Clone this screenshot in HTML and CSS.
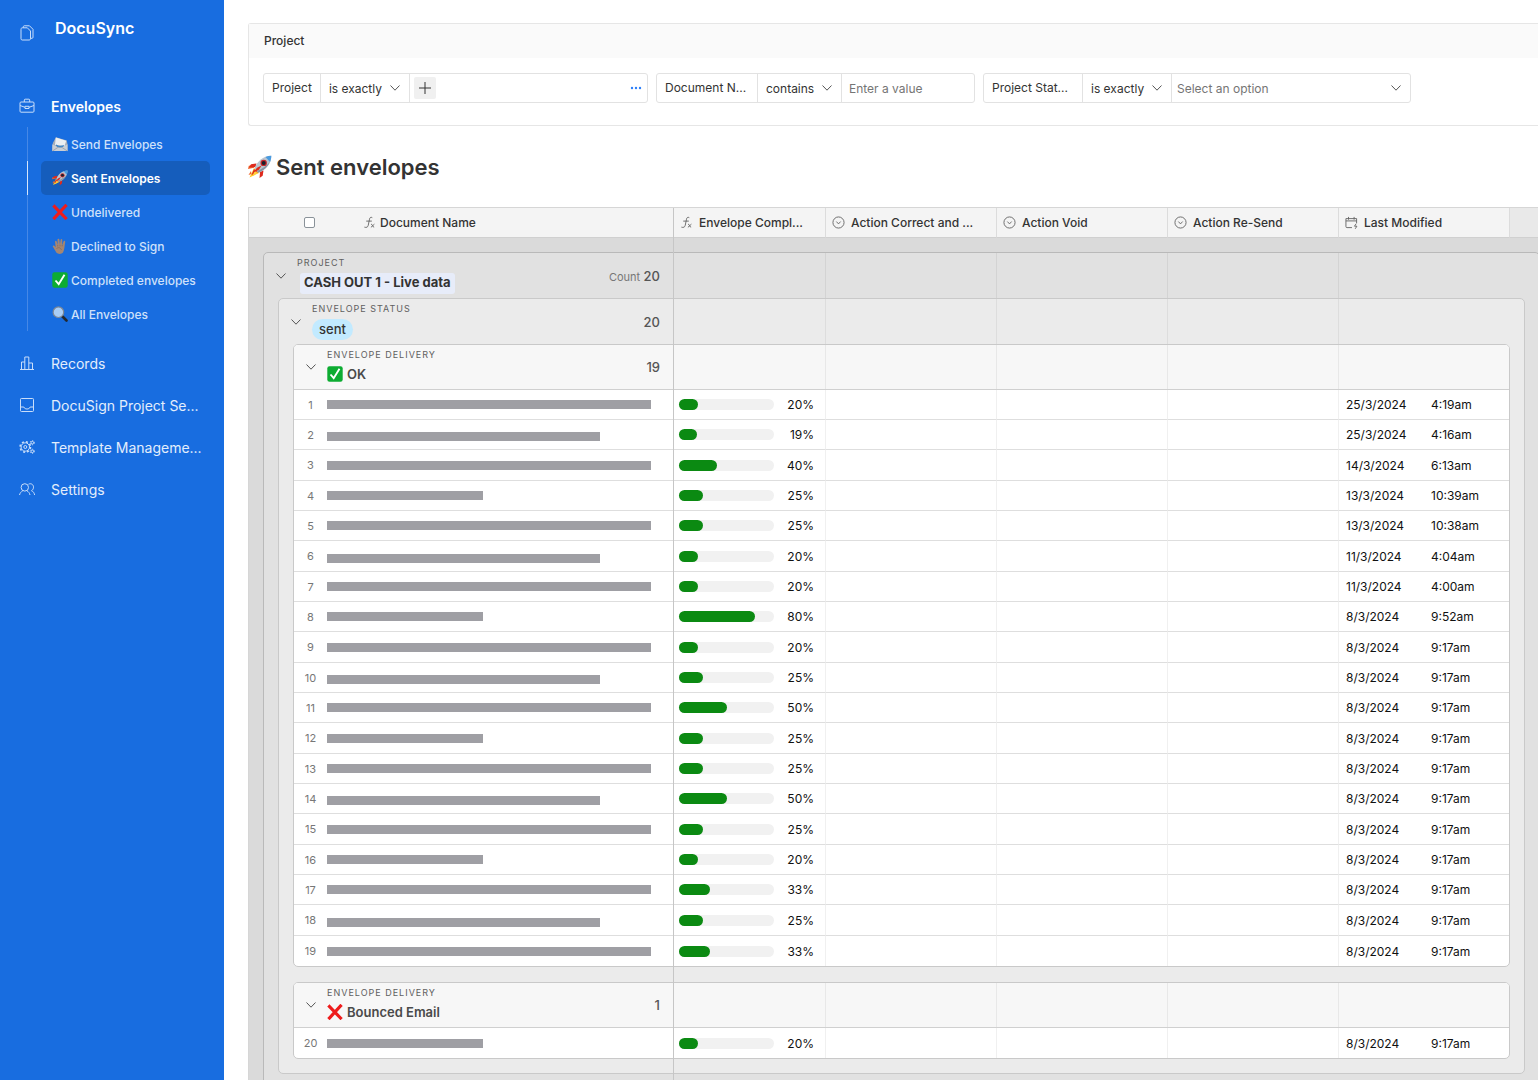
FILE: index.html
```html
<!DOCTYPE html>
<html lang="en">
<head>
  <meta charset="UTF-8">
  <meta name="viewport" content="width=device-width, initial-scale=1">
  <title>DocuSync - Sent envelopes</title>
  <link rel="stylesheet" href="styles.css">
</head>
<body>

  <!-- shared icons -->
  <svg class="sprite" aria-hidden="true">
    <symbol id="chevron" viewBox="0 0 12 12"><path d="M1.500 3.500L6 8.200l4.500-4.700"/></symbol>
    <symbol id="formula" viewBox="0 0 14 14"><path d="M10 1.800C8.300.8 7.300 1.700 7 3.500L5.600 10.200C5.200 12 3.800 12.700 1.500 12M3.500 5.500h6M8.700 8.800c1.500-.4 1.700 3.600 3.300 3.200M12.300 8.800L8.500 12.200"/></symbol>
    <symbol id="select" viewBox="0 0 14 14"><circle cx="7" cy="7" r="6"/><path d="M4.700 6L7 8.500 9.300 6"/></symbol>
    <symbol id="calendar" viewBox="0 0 14 14"><path d="M7.500 12.500H2.200a1.200 1.200 0 0 1-1.200-1.200V2.800h11.500v5M1 5.300h11.500M3.800 1v3M9.800 1v3M12 8.300l-1.800 2.700h2.600L11 13.800"/></symbol>
    <symbol id="rocket" viewBox="0 0 24 24">
      <path fill="#ffc928" d="M6 13l-4.500 9.500L11 18z"/>
      <path fill="#f0652b" d="M7.500 9.500L.8 10.800 0 14l6-1.200zM3 16l-2.500 4 3-1z"/>
      <path fill="#dd2a1d" d="M8.500 8.500L3 9.200 1 12.500l6.500-.5zM15.500 15.500l-.8 5.300-3.200 2.200.6-6.200zM6 14l-2.500 6L9.800 17.600z"/>
      <path fill="#ffd23c" d="M6.800 15.500L4.500 21l5-3z"/>
      <path fill="#b9c4cf" d="M6.500 13.500C9 6.500 15 .8 23.300.7c0 7.700-4.800 13.800-12.800 17z"/>
      <path fill="#4a9be0" d="M17.500 1.900C19.300 1.100 21.200.7 23.300.7c0 2.300-.5 4.500-1.300 6.300z"/>
      <path fill="#8794a3" d="M21.900 7c-2 4.700-6 8.500-11.400 10.700l-1.700-1.800C14.500 14 19 10.500 21.900 7z"/>
      <circle cx="15.700" cy="7.900" r="3.200" fill="#c6242a"/>
      <circle cx="15.700" cy="7.900" r="2" fill="#17202c"/>
      <path fill="#dd2a1d" d="M13.500 10.500L9 12.800l-4 5 6-3z"/>
    </symbol>
    <symbol id="cross" viewBox="0 0 16 16"><path fill="none" stroke="#ee1c1c" stroke-width="3.200" stroke-linecap="square" d="M2.500 2.500l11 11.500M13.500 2L2.500 14"/></symbol>
    <symbol id="check" viewBox="0 0 16 16">
      <rect x=".3" y=".3" width="15.400" height="15.400" rx="2.200" fill="#0dac32"/>
      <path fill="none" stroke="#fff" stroke-width="1.900" d="M3.500 8.500l3.200 3.700 5.800-9.400"/>
    </symbol>
    <symbol id="envelope" viewBox="0 0 16 16">
      <path fill="#a9afb8" d="M.8 7L4 1.200 14.800 4.500l.7 4V15H.3z"/>
      <path fill="#eceff2" d="M3.800 1.500l10.400 3.300L12.500 10 3 9z"/>
      <path fill="#3f87c9" d="M4 8.500c3 1.700 5.500 1.500 8 .5l-.5 2c-3 1-5.500.7-7.500-1z"/>
      <path fill="#c9ced5" d="M.3 8.200l6.500 3.600h2.500l6.200-3.600V15H.3z"/>
      <path fill="none" stroke="#8e96a1" stroke-width=".7" d="M.5 15l6-4M15.300 15l-6-4"/>
    </symbol>
    <symbol id="hand" viewBox="0 0 16 16">
      <path fill="#a58672" d="M4.300 14.500C3 12.500 1.700 10 .8 8.600c-.4-1 .8-1.600 1.600-.8l1.300 1.500L3 3.800c-.1-1.200 1.400-1.500 1.700-.3l1 3.700-.2-5.500c0-1.300 1.700-1.400 1.900-.1l.5 5.200.7-5c.2-1.200 1.800-1 1.700.3l-.2 5.300 1.400-3.900c.4-1.100 1.900-.7 1.700.5-.7 3.500-.7 8-2.200 10.500-1.300 1.900-5.200 1.900-6.700 0z"/>
      <path fill="none" stroke="#7d6557" stroke-width=".6" d="M5.700 7v1.500M8 6.700v1.600M10.200 7v1.300M4.500 10.500c2-1.500 4-1 5 1.500"/>
    </symbol>
    <symbol id="magnifier" viewBox="0 0 16 16">
      <path stroke="#23282f" stroke-width="2.600" stroke-linecap="round" d="M10.500 10.500l4 4"/>
      <circle cx="6.400" cy="6.200" r="5.300" fill="#a9cdf5" stroke="#7d8794" stroke-width="1.200"/>
    </symbol>
  </svg>

  <div class="app">
    <aside class="sidebar">
      <div class="brand">
        <svg class="icon" viewBox="0 0 16 16"><path d="M2 4.500v9.300c0 .7.500 1.200 1.200 1.200h7.100c.7 0 1.200-.5 1.200-1.200V6L8.300 2.800H3.200C2.500 2.800 2 3.400 2 4.500zM4.300 2.800V1.700c0-.5.400-.9.900-.9h5.300L14 4.300v8c0 .6-.4 1-1 1h-1.500"/></svg>
        <strong>DocuSync</strong>
      </div>

      <nav>
        <a class="nav-link open" href="#envelopes">
          <svg class="icon" viewBox="0 0 16 16"><path d="M2 4h12c.6 0 1 .4 1 1v8.200c0 .6-.4 1-1 1H2c-.6 0-1-.4-1-1V5c0-.6.4-1 1-1zM5.300 4V2c0-.5.3-.8.800-.8h3.800c.5 0 .8.3.8.800v2M1 7.500l5 1.800M15 7.500l-5 1.800M6 8.300h4v2.200H6z"/></svg>
          Envelopes
        </a>
        <ul class="subnav">
          <li><a href="#send"><svg><use href="#envelope"/></svg>Send Envelopes</a></li>
          <li class="active"><a href="#sent"><svg><use href="#rocket"/></svg>Sent Envelopes</a></li>
          <li><a href="#undelivered"><svg><use href="#cross"/></svg>Undelivered</a></li>
          <li><a href="#declined"><svg><use href="#hand"/></svg>Declined to Sign</a></li>
          <li><a href="#completed"><svg><use href="#check"/></svg>Completed envelopes</a></li>
          <li><a href="#all"><svg><use href="#magnifier"/></svg>All Envelopes</a></li>
        </ul>
        <a class="nav-link" href="#records">
          <svg class="icon" viewBox="0 0 16 16"><path d="M1 14.500h14M2.500 14.500V7h3.300M5.800 14.500V2h4v12.500M9.800 8h3.700v6.500"/></svg>
          Records
        </a>
        <a class="nav-link" href="#project-settings">
          <svg class="icon" viewBox="0 0 16 16"><path d="M2.300 1.500h11.400c.5 0 .8.300.8.800v11.400c0 .5-.3.800-.8.800H2.300c-.5 0-.8-.3-.8-.8V2.300c0-.5.300-.8.8-.8zM1.500 10h3.300c.5 1.300 1.600 2 3.200 2s2.700-.7 3.200-2h3.300"/></svg>
          DocuSign Project Se...
        </a>
        <a class="nav-link" href="#templates">
          <svg class="icon" viewBox="0 0 16 16"><circle cx="6.300" cy="8" r="4.200"/><circle cx="6.300" cy="8" r="1.500"/><circle cx="6.300" cy="8" r="5.200" stroke-width="1.600" stroke-dasharray="2 2.080"/><circle cx="13.300" cy="3.700" r="1.300"/><circle cx="13.300" cy="12.300" r="1.300"/><circle cx="13.300" cy="3.700" r="2.100" stroke-dasharray="1 1.200"/><circle cx="13.300" cy="12.300" r="2.100" stroke-dasharray="1 1.200"/></svg>
          Template Manageme...
        </a>
        <a class="nav-link" href="#settings">
          <svg class="icon" viewBox="0 0 16 16"><circle cx="5.800" cy="6.400" r="3.700"/><path d="M.5 14c.6-2.200 1.700-3.300 3.200-4.200M8 9.800c1.400.8 2.500 2 3 4.200M9.500 3.200c2.500-1.300 5 .3 5 3 0 1.600-.8 2.800-2 3.500 1.700.7 2.700 2.200 3.200 4.300"/></svg>
          Settings
        </a>
      </nav>
    </aside>

    <main>
      <section class="panel">
        <h2>Project</h2>
        <form class="filters">
          <div class="filter filter-project">
            <span class="field">Project</span>
            <span class="dropdown">
              <select aria-label="Project operator"><option>is exactly</option></select>
              <svg class="chevron"><use href="#chevron"/></svg>
            </span>
            <span class="picker">
              <button type="button" class="add" aria-label="Add project"><svg viewBox="0 0 12 12"><path d="M6 0v12M0 6h12"/></svg></button>
              <button type="button" class="more" aria-label="More"><svg viewBox="0 0 12 4"><circle cx="2" cy="2" r="1.200"/><circle cx="6" cy="2" r="1.200"/><circle cx="10" cy="2" r="1.200"/></svg></button>
            </span>
          </div>
          <div class="filter filter-document">
            <label class="field" for="documentName">Document N...</label>
            <span class="dropdown">
              <select aria-label="Document name operator"><option>contains</option></select>
              <svg class="chevron"><use href="#chevron"/></svg>
            </span>
            <input type="text" id="documentName" placeholder="Enter a value">
          </div>
          <div class="filter filter-status">
            <label class="field" for="projectStatus">Project Stat...</label>
            <span class="dropdown">
              <select aria-label="Project status operator"><option>is exactly</option></select>
              <svg class="chevron"><use href="#chevron"/></svg>
            </span>
            <span class="dropdown option">
              <select id="projectStatus"><option>Select an option</option></select>
              <svg class="chevron"><use href="#chevron"/></svg>
            </span>
          </div>
        </form>
      </section>

      <h1><svg><use href="#rocket"/></svg>Sent envelopes</h1>

      <div class="sheet">
        <table class="columns">
          <colgroup><col class="c-lead"><col class="c-progress"><col class="c-action"><col class="c-action"><col class="c-action"><col><col class="c-tail"></colgroup>
          <tr>
            <th><div class="first"><input type="checkbox" aria-label="Select all"><svg><use href="#formula"/></svg>Document Name</div></th>
            <th><div><svg><use href="#formula"/></svg>Envelope Compl...</div></th>
            <th><div><svg><use href="#select"/></svg>Action Correct and ...</div></th>
            <th><div><svg><use href="#select"/></svg>Action Void</div></th>
            <th><div><svg><use href="#select"/></svg>Action Re-Send</div></th>
            <th><div><svg><use href="#calendar"/></svg>Last Modified</div></th>
            <td class="tail"></td>
          </tr>
        </table>

        <section class="group project">
          <header class="group-head">
            <div class="group-title">
              <button type="button" aria-label="Collapse project"><svg class="chevron"><use href="#chevron"/></svg></button>
              <div class="group-name"><small>Project</small><span class="record">CASH OUT 1 - Live data</span></div>
              <div class="count"><span>Count</span> 20</div>
            </div>
            <i></i><i></i><i></i><i></i><i></i>
          </header>

          <section class="group status">
            <header class="group-head">
              <div class="group-title">
                <button type="button" aria-label="Collapse status"><svg class="chevron"><use href="#chevron"/></svg></button>
                <div class="group-name"><small>Envelope Status</small><span class="pill">sent</span></div>
                <div class="count">20</div>
              </div>
              <i></i><i></i><i></i><i></i><i></i>
            </header>

            <section class="group delivery">
              <header class="group-head">
                <div class="group-title">
                  <button type="button" aria-label="Collapse OK"><svg class="chevron"><use href="#chevron"/></svg></button>
                  <div class="group-name"><small>Envelope Delivery</small><b><svg><use href="#check"/></svg>OK</b></div>
                  <div class="count">19</div>
                </div>
                <i></i><i></i><i></i><i></i><i></i>
              </header>
              <table class="rows">
                <colgroup><col class="c-num"><col class="c-name"><col class="c-progress"><col class="c-action"><col class="c-action"><col class="c-action"><col></colgroup>
                <tbody id="okRows"></tbody>
              </table>
            </section>

            <section class="group delivery">
              <header class="group-head">
                <div class="group-title">
                  <button type="button" aria-label="Collapse Bounced Email"><svg class="chevron"><use href="#chevron"/></svg></button>
                  <div class="group-name"><small>Envelope Delivery</small><b><svg><use href="#cross"/></svg>Bounced Email</b></div>
                  <div class="count">1</div>
                </div>
                <i></i><i></i><i></i><i></i><i></i>
              </header>
              <table class="rows">
                <colgroup><col class="c-num"><col class="c-name"><col class="c-progress"><col class="c-action"><col class="c-action"><col class="c-action"><col></colgroup>
                <tbody id="bouncedRows"></tbody>
              </table>
            </section>
          </section>
        </section>
      </div>
    </main>
  </div>

  <script>
    // name length, percent complete, date, time
    const ok = [
      ['long', 20, '25/3/2024', '4:19am'],
      ['medium', 19, '25/3/2024', '4:16am'],
      ['long', 40, '14/3/2024', '6:13am'],
      ['short', 25, '13/3/2024', '10:39am'],
      ['long', 25, '13/3/2024', '10:38am'],
      ['medium', 20, '11/3/2024', '4:04am'],
      ['long', 20, '11/3/2024', '4:00am'],
      ['short', 80, '8/3/2024', '9:52am'],
      ['long', 20, '8/3/2024', '9:17am'],
      ['medium', 25, '8/3/2024', '9:17am'],
      ['long', 50, '8/3/2024', '9:17am'],
      ['short', 25, '8/3/2024', '9:17am'],
      ['long', 25, '8/3/2024', '9:17am'],
      ['medium', 50, '8/3/2024', '9:17am'],
      ['long', 25, '8/3/2024', '9:17am'],
      ['short', 20, '8/3/2024', '9:17am'],
      ['long', 33, '8/3/2024', '9:17am'],
      ['medium', 25, '8/3/2024', '9:17am'],
      ['long', 33, '8/3/2024', '9:17am']
    ];
    const bounced = [
      ['short', 20, '8/3/2024', '9:17am']
    ];

    function renderRows(id, rows, start) {
      document.getElementById(id).innerHTML = rows.map(([size, percent, date, time], index) => `
        <tr>
          <td class="num">${start + index}</td>
          <td><span class="hidden-name ${size}"></span></td>
          <td><div class="progress"><span class="track"><span class="fill" style="width: ${percent}%"></span></span>${percent}%</div></td>
          <td></td>
          <td></td>
          <td></td>
          <td><div class="modified"><span>${date}</span><span>${time}</span></div></td>
        </tr>
      `).join('');
    }

    renderRows('okRows', ok, 1);
    renderRows('bouncedRows', bounced, 20);
  </script>

</body>
</html>
```

FILE: styles.css
```css
* {
  box-sizing: border-box;
}
body {
  margin: 0;
  font-family: Inter, "Liberation Sans", sans-serif;
  font-size: 12px;
  color: #333;
  background-color: #fff;
}
button, input, select {
  font: inherit;
  color: inherit;
}
button {
  padding: 0;
  border: 0;
  background: none;
  cursor: pointer;
}
svg {
  flex: none;
  fill: none;
  stroke: currentColor;
}
.sprite {
  display: none;
}
#rocket, #cross, #check, #envelope, #hand, #magnifier {
  stroke: none;
}
.chevron {
  width: 12px;
  height: 12px;
  color: #555;
}
.app {
  display: flex;
  height: 100vh;
  overflow: hidden;
}

/* sidebar */
.sidebar {
  flex: 0 0 224px;
  padding: 17px 14px 0 0;
  background-color: #186de0;
  color: #e3eefc;
}
.icon {
  width: 16px;
  height: 16px;
  color: #c9defa;
}
.brand {
  display: flex;
  align-items: flex-start;
  gap: 20px;
  height: 68px;
  padding-left: 19px;
  font-size: 16px;
  line-height: 22px;
  color: #fff;
}
.brand strong {
  font-weight: 600;
}
.brand .icon {
  margin-top: 8px;
}
.nav-link {
  display: flex;
  align-items: center;
  gap: 16px;
  height: 42px;
  padding-left: 19px;
  color: inherit;
  font-size: 14px;
  white-space: nowrap;
  text-decoration: none;
}
.nav-link.open {
  color: #fff;
  font-weight: 600;
}
.subnav {
  margin: 0 0 11px 27px;
  padding: 0;
  list-style: none;
}
.subnav li {
  padding-left: 13px;
  border-left: 1px solid #4688e6;
}
.subnav li.active {
  border-color: #d5e5fb;
}
.subnav a {
  display: flex;
  align-items: center;
  gap: 3px;
  height: 34px;
  padding-left: 11px;
  border-radius: 5px;
  color: #cfe1fa;
  font-weight: 500;
  text-decoration: none;
}
.subnav .active a {
  background-color: #155dbc;
  color: #fff;
  font-weight: 600;
}
.subnav svg {
  width: 16px;
  height: 16px;
}

/* filters */
main {
  flex: 1;
  min-width: 0;
  padding: 23px 0 0 24px;
  overflow: hidden;
}
.panel {
  border: 1px solid #e6e6e6;
  border-right: 0;
  border-radius: 3px 0 0 3px;
}
.panel h2 {
  margin: 0;
  padding: 0 15px;
  background-color: #fafafa;
  font-size: 12px;
  font-weight: 500;
  line-height: 34px;
}
.filters {
  display: flex;
  gap: 8px;
  padding: 15px 15px 22px 14px;
}
.filter {
  display: flex;
  min-width: 0;
  height: 30px;
  border: 1px solid #e2e2e2;
  border-radius: 3px;
}
.filter-project {
  flex: 0 1 385px;
}
.filter-document {
  flex: 0 1 319px;
}
.filter-status {
  flex: 0 1 428px;
}
.filter > * + * {
  border: 0;
  border-left: 1px solid #e2e2e2;
}
.field {
  padding: 0 8px;
  line-height: 28px;
  white-space: nowrap;
}
.filter-document .field {
  flex: 0 0 100px;
}
.filter-status .field {
  flex: 0 0 98px;
}
.dropdown {
  position: relative;
  flex: 0 0 89px;
}
.filter-document .dropdown {
  flex-basis: 84px;
}
.filter .option {
  flex: 1;
}
.dropdown select {
  width: 100%;
  height: 28px;
  padding: 0 20px 0 8px;
  border: 0;
  background: none;
  appearance: none;
}
.option select {
  padding-left: 5px;
  color: #757575;
}
.dropdown .chevron {
  position: absolute;
  top: 8px;
  right: 8px;
  pointer-events: none;
}
.picker {
  flex: 1;
  display: flex;
  align-items: center;
  justify-content: space-between;
  padding: 0 5px 0 4px;
}
.add {
  display: grid;
  place-items: center;
  width: 22px;
  height: 22px;
  border-radius: 2px;
  background-color: #f0f0f0;
}
.add svg {
  width: 12px;
  height: 12px;
}
.more svg {
  display: block;
  width: 12px;
  height: 4px;
  fill: #2d7ff9;
  stroke: none;
}
.filter input {
  flex: 1;
  min-width: 0;
  padding: 0 7px;
  background: none;
}
.filter input::placeholder {
  color: #757575;
}

h1 {
  display: flex;
  align-items: center;
  gap: 4px;
  margin: 25px 0 24px;
  font-size: 22px;
  font-weight: 600;
  line-height: 32px;
}
h1 svg {
  width: 24px;
  height: 24px;
}

/* grouped grid */
.sheet {
  position: relative;
  min-width: 1292px;
  min-height: 100vh;
  border: 1px solid #d6d6d6;
  border-right: 0;
  background-color: #dadada;
}
/* edge of the frozen first column */
.sheet::after {
  content: "";
  position: absolute;
  top: 0;
  bottom: 0;
  left: 424px;
  width: 1px;
  background-color: #c6c6c6;
}
table {
  width: 100%;
  border-spacing: 0;
  table-layout: fixed;
}
th, td {
  padding: 0;
}
.c-lead {
  width: 425px;
}
.c-num {
  width: 33px;
}
.c-name {
  width: 347px;
}
.c-progress {
  width: 151px;
}
.c-action {
  width: 171px;
}
.c-tail {
  width: 31px;
}
.columns {
  background-color: #f4f4f4;
}
.columns th, .columns td {
  height: 30px;
  border-bottom: 1px solid #d0d0d0;
  font-weight: 500;
}
.columns th:nth-child(n+3), .columns td {
  border-left: 1px solid #dcdcdc;
}
.columns div {
  display: flex;
  align-items: center;
  gap: 6px;
  padding-left: 6px;
  white-space: nowrap;
}
.columns .first {
  gap: 4px;
  padding-left: 55px;
}
.columns svg {
  width: 13px;
  height: 13px;
  color: #666;
}
.columns input {
  appearance: none;
  width: 11px;
  height: 11px;
  margin: 0 44px 0 0;
  border: 1px solid #8a9299;
  border-radius: 2px;
  background-color: #fff;
}
.columns .tail {
  background-color: #e9e9e9;
}
.group {
  margin: 0 14px 14px;
  border: 1px solid #c9c9c9;
  border-radius: 5px;
}
.project {
  margin: 14px 0 0 14px;
  padding-bottom: 14px;
  border-color: #b9b9b9;
  background-color: #e1e1e1;
}
.status {
  background-color: #ebebeb;
  --lead: 395px;
}
.delivery {
  margin-bottom: 15px;
  background-color: #fff;
  overflow: hidden;
  --lead: 380px;
}
.delivery:last-child {
  margin-bottom: 14px;
}
.group-head {
  display: grid;
  grid-template-columns: var(--lead, 410px) 151px 171px 171px 171px 1fr;
  height: 45px;
}
.delivery .group-head {
  border-bottom: 1px solid #d0d0d0;
  background-color: #f7f7f7;
}
.group-head i + i {
  border-left: 1px solid rgba(0, 0, 0, 0.06);
}
.group-title {
  display: grid;
  grid-template-columns: 33px 1fr auto;
  align-items: center;
  padding-right: 14px;
}
.group-title button {
  display: grid;
  place-items: center;
}
.group-name {
  align-self: start;
  padding-top: 4px;
  font-size: 13px;
}
.group-name small {
  display: block;
  font-size: 9px;
  line-height: 11px;
  letter-spacing: 1px;
  text-transform: uppercase;
  color: #606060;
}
.group-name b {
  display: flex;
  align-items: center;
  gap: 4px;
  padding-top: 4px;
  font-weight: 600;
  line-height: 20px;
  color: #4a4a4a;
}
.group-name svg {
  width: 16px;
  height: 16px;
}
.record, .pill {
  display: inline-block;
  line-height: 21px;
}
.record {
  margin: 5px 0 0 3px;
  padding: 0 4px 2px;
  border-radius: 3px;
  background-color: #e7ecf9;
  font-weight: 700;
  line-height: 19px;
}
.pill {
  margin-top: 5px;
  padding: 0 7px;
  border-radius: 11px;
  background-color: #c2eaff;
  font-weight: 500;
}
.count {
  font-size: 13px;
  font-weight: 500;
  color: #555;
}
.count span {
  font-size: 11px;
  font-weight: 400;
  color: #777;
}
.rows td {
  height: 30px;
  border-bottom: 1px solid #dedede;
}
.rows tr:nth-child(3n) td {
  height: 31px;
}
.rows tr:last-child td {
  border-bottom: 0;
}
.rows td:nth-child(n+4) {
  border-left: 1px solid #f0f0f0;
}
.rows .num {
  font-size: 11px;
  text-align: center;
  color: #777;
}
.hidden-name {
  display: block;
  height: 9px;
  background-color: #9f9fa4;
}
.long {
  width: 324px;
}
.medium {
  width: 273px;
  margin-top: 4px;
}
.short {
  width: 156px;
}
.progress {
  display: flex;
  align-items: center;
  justify-content: space-between;
  padding: 0 11px 0 5px;
  color: #111;
}
.track {
  width: 95px;
  height: 11px;
  border-radius: 6px;
  background-color: #f1f1f1;
}
.fill {
  display: block;
  height: 11px;
  border-radius: 6px;
  background-color: #0b8a12;
}
.modified {
  display: grid;
  grid-template-columns: 85px 1fr;
  padding-left: 7px;
  color: #111;
}
```
